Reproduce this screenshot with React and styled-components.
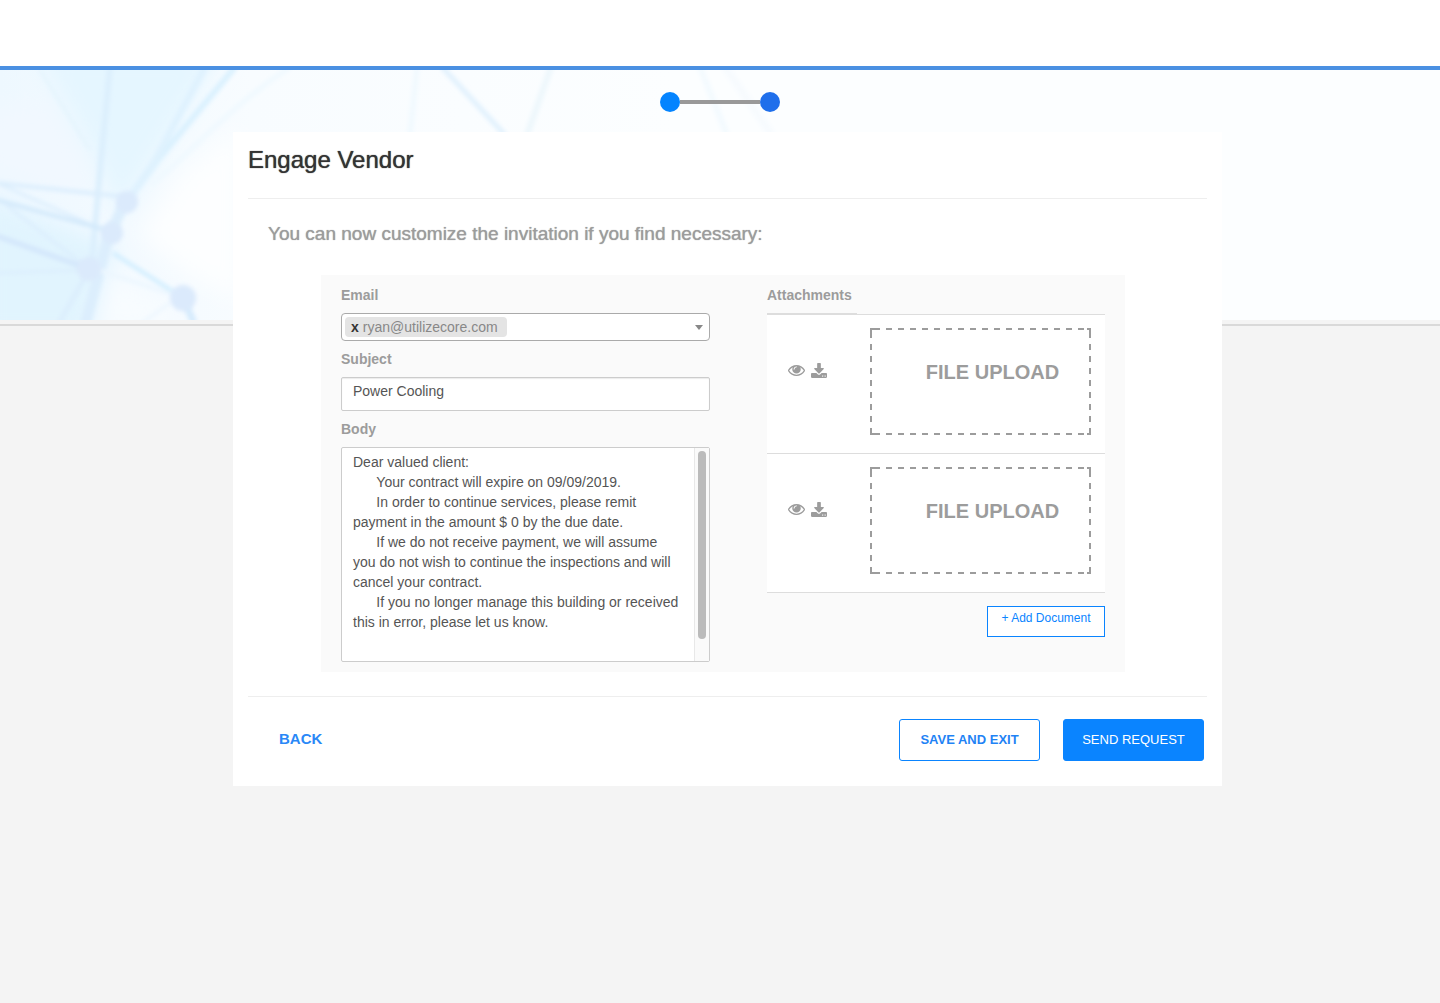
import React, { useState } from "react";
import styled, { createGlobalStyle, css } from "styled-components";

const GREY = "#9c9c9c";

const GlobalStyle = createGlobalStyle`
  *, *::before, *::after { box-sizing: border-box; }
  body {
    margin: 0;
    background: #f4f4f4;
    color: #333;
    font-family: "Liberation Sans", Helvetica, Arial, sans-serif;
    font-size: 14px;
    line-height: 20px;
  }
  button, input, textarea { font: inherit; }
`;

const TopBar = styled.header`
  height: 70px;
  background: #fff;
  border-bottom: 4px solid #4a90e2;
`;

const Page = styled.main`
  display: grid;
  grid-template-columns: minmax(0, 1fr);
  grid-template-rows: 256px auto;
`;

const Banner = styled.div`
  grid-area: 1 / 1;
  overflow: hidden;
  background: #fcfeff;
  border-bottom: 2px solid #d9d9d9;
  box-shadow: inset 0 -4px 0 #f4f4f4;

  svg { display: block; height: 250px; }
`;

const Content = styled.div`
  grid-area: 1 / 1 / 3 / 2;
  z-index: 1;
`;

const Steps = styled.nav`
  display: flex;
  align-items: center;
  justify-content: center;
  padding: 22px 0 20px;
`;

const StepDot = styled.span`
  width: 20px;
  height: 20px;
  border-radius: 50%;
  background: ${(p) => (p.$current ? "#1f6feb" : "#0484ff")};
`;

const StepLine = styled.span`
  width: 80px;
  height: 4px;
  background: #999;
`;

const CardArea = styled.div`
  display: flex;
  justify-content: center;
  padding-left: 15px;
`;

const Card = styled.section`
  width: 100%;
  max-width: 989px;
  padding: 0 15px;
  background: #fff;
`;

const Title = styled.h1`
  margin: 0;
  padding: 12px 0 22px;
  border-bottom: 1px solid #eee;
  font-size: 24px;
  font-weight: 400;
  line-height: 32px;
  text-shadow: 0 0 1px #333;
`;

const Intro = styled.p`
  margin: 0;
  padding: 24px 20px 30px;
  color: ${GREY};
  font-size: 19px;
  line-height: 22px;
  text-shadow: 0 0 1px ${GREY};
`;

const Panel = styled.form`
  display: grid;
  grid-template-columns: 369fr 338fr;
  gap: 57px;
  margin: 0 82px 24px 73px;
  padding: 10px 20px;
  background: #fafafa;
`;

const Fields = styled.div`
  display: flex;
  flex-direction: column;
  gap: 8px;
`;

const FieldLabel = styled.label`
  color: ${GREY};
  font-weight: 700;
`;

const TagBox = styled.div`
  display: flex;
  align-items: center;
  height: 28px;
  padding: 0 3px;
  border: 1px solid #aaa;
  border-radius: 4px;
  background: #fff;
`;

const Tag = styled.span`
  display: flex;
  align-items: center;
  gap: 4px;
  height: 20px;
  padding: 0 9px 0 6px;
  border-radius: 4px;
  background: #e4e4e4;
  color: #888;
`;

const TagRemove = styled.button`
  padding: 0;
  border: 0;
  background: none;
  color: #333;
  font-weight: 700;
  line-height: 18px;
  cursor: pointer;
`;

const TagInput = styled.input`
  flex: 1;
  min-width: 0;
  border: 0;
  outline: 0;
  background: transparent;
`;

const Caret = styled.button`
  display: flex;
  padding: 3px;
  border: 0;
  background: none;
  cursor: pointer;

  &::before {
    content: "";
    border: 4px solid transparent;
    border-top: 5px solid #888;
    border-bottom: 0;
  }
`;

const TextInput = styled.input`
  width: 100%;
  height: 34px;
  padding: 0 11px 6px;
  border: 1px solid #ccc;
  border-radius: 2px;
  background: #fff;
  box-shadow: inset 0 1px 1px rgba(0, 0, 0, 0.08);
  color: #555;
`;

const Editor = styled.div`
  display: flex;
  height: 215px;
  border: 1px solid #ccc;
  border-radius: 2px;
  background: #fff;
`;

const TextArea = styled.textarea`
  flex: 1;
  min-width: 0;
  padding: 4px 12px 8px 11px;
  border: 0;
  outline: 0;
  background: transparent;
  color: #555;
  resize: none;
  scrollbar-width: none;
`;

const ScrollTrack = styled.div`
  width: 15px;
  padding: 3px 3px 3px 3px;
  border-left: 1px solid #e8e8e8;
  background: #fafafa;
`;

const ScrollThumb = styled.div`
  width: 8px;
  border-radius: 4px;
  background: #bbb;
`;

const Files = styled.div`
  display: flex;
  flex-direction: column;
  align-items: flex-end;
  gap: 13px;
`;

const FileTable = styled.table`
  width: 100%;
  border-collapse: collapse;
`;

const FileHead = styled.th`
  width: 90px;
  height: 29px;
  padding: 0;
  border-bottom: 2px solid #ddd;
  color: ${GREY};
  text-align: left;
  vertical-align: top;
`;

const FileRow = styled.tr`
  background: #fff;
  border-top: 1px solid #ddd;
  border-bottom: 1px solid #ddd;
`;

const ActionCell = styled.td`
  padding: 0 0 26px 21px;
`;

const Actions = styled.div`
  display: flex;
  align-items: center;
  gap: 6px;
`;

const IconButton = styled.button`
  display: flex;
  padding: 0;
  border: 0;
  background: none;
  color: ${GREY};
  cursor: pointer;
`;

const DropCell = styled.td`
  padding: 13px 14px 18px 13px;
`;

const fill = `linear-gradient(${GREY}, ${GREY})`;
const across = `linear-gradient(90deg, ${GREY} 50%, transparent 50%)`;
const down = `linear-gradient(${GREY} 50%, transparent 50%)`;

/* Six-pixel dashes with six-pixel gaps, and solid corners. */
const dashedFrame = css`
  background:
    ${across} 4px top / 12px 2px repeat-x,
    ${across} 4px bottom / 12px 2px repeat-x,
    ${down} left 4px / 2px 12px repeat-y,
    ${down} right 4px / 2px 12px repeat-y,
    ${fill} left top / 4px 2px no-repeat,
    ${fill} right top / 4px 2px no-repeat,
    ${fill} left bottom / 4px 2px no-repeat,
    ${fill} right bottom / 4px 2px no-repeat,
    ${fill} left top / 2px 4px no-repeat,
    ${fill} right top / 2px 4px no-repeat,
    ${fill} left bottom / 2px 4px no-repeat,
    ${fill} right bottom / 2px 4px no-repeat;
`;

const DropZone = styled.label`
  display: flex;
  justify-content: center;
  height: 107px;
  padding: 33px 0 0 24px;
  ${dashedFrame}
  color: ${GREY};
  font-size: 20px;
  font-weight: 700;
  line-height: 22px;
  cursor: pointer;
`;

const FileInput = styled.input`
  position: absolute;
  width: 1px;
  height: 1px;
  opacity: 0;
`;

const AddButton = styled.button`
  min-width: 118px;
  height: 31px;
  padding: 0 12px 6px;
  border: 1px solid #0a84ff;
  background: #fff;
  color: #0a84ff;
  font-size: 12px;
  line-height: 20px;
  cursor: pointer;
`;

const Footer = styled.footer`
  display: flex;
  align-items: center;
  gap: 23px;
  padding: 22px 3px 25px 31px;
  border-top: 1px solid #eee;
`;

const BackLink = styled.a`
  margin-right: auto;
  padding-bottom: 2px;
  color: #2a88f7;
  font-size: 15px;
  font-weight: 700;
  text-decoration: none;
`;

const FooterButton = styled.button`
  width: 141px;
  height: 42px;
  padding: 0;
  border: 1px solid #0a84ff;
  border-radius: 3px;
  background: ${(p) => (p.$primary ? "#0a84ff" : "#fff")};
  color: ${(p) => (p.$primary ? "#fff" : "#1f83f5")};
  font-size: 13px;
  font-weight: ${(p) => (p.$primary ? 400 : 700)};
  cursor: pointer;
`;

const MESSAGE = `Dear valued client:
      Your contract will expire on 09/09/2019.
      In order to continue services, please remit payment in the amount $ 0 by the due date.
      If we do not receive payment, we will assume you do not wish to continue the inspections and will cancel your contract.
      If you no longer manage this building or received this in error, please let us know.

`;

function Network() {
  return (
    <svg width="900" height="250" viewBox="0 0 900 250" aria-hidden="true">
      <defs>
        <linearGradient id="wash" x1="0" x2="1" y1="0" y2="0">
          <stop offset="0" stopColor="#eef8ff" />
          <stop offset="0.28" stopColor="#f8fcff" />
          <stop offset="0.75" stopColor="#fcfeff" />
        </linearGradient>
        <filter id="haze" x="-20%" y="-20%" width="140%" height="140%">
          <feGaussianBlur stdDeviation="11" />
        </filter>
        <filter id="soft" filterUnits="userSpaceOnUse" x="-20" y="-20" width="940" height="290">
          <feGaussianBlur stdDeviation="2" />
        </filter>
      </defs>
      <rect width="900" height="250" fill="url(#wash)" />
      <g filter="url(#haze)">
        <path d="M35 -20H225L155 90L118 145L96 90Z" fill="#e5f6ff" />
        <path d="M-20 125L90 165L115 175L88 270H-20Z" fill="#e1f4fe" />
        <path d="M-20 40L50 30L90 100L80 125L-20 100Z" fill="#f1f8ff" />
        <path d="M240 60L185 100L140 165L190 205L240 230Z" fill="#fdfeff" />
        <path d="M105 200L170 235L175 260H95Z" fill="#f8fcff" />
      </g>
      <g filter="url(#soft)" fill="none" stroke="#dceefd" strokeWidth="4">
        <path d="M235 -3L160 87L127 132" stroke="#daf1fe" strokeWidth="6" />
        <path d="M205 -3L155 90L124 136" stroke="#dff2fe" strokeWidth="7" />
        <path d="M126 130L108 168L85 255" stroke="#dceefd" strokeWidth="11" />
        <path d="M110 -3L102 80L91 200" stroke="#dceffd" strokeWidth="6" />
        <path d="M-3 113L127 127" />
        <path d="M-3 113L110 163" strokeWidth="3" />
        <path d="M-3 130L110 161" stroke="#d3e9fb" />
        <path d="M5 134L89 199" strokeWidth="3" />
        <path d="M-3 166L89 199" stroke="#d3e6fb" strokeWidth="5" />
        <path d="M-3 203L89 200" strokeWidth="3" />
        <path d="M113 183L183 228" stroke="#d2eefe" />
        <path d="M183 228L194 253" stroke="#d6ebfd" strokeWidth="7" />
        <path d="M89 200L58 255" strokeWidth="5" />
        <path d="M98 200L175 225" stroke="#edf7fe" />
        <path d="M170 233L142 253" stroke="#edf7fe" strokeWidth="3" />
        <path d="M40 0L90 80" stroke="#e4f4fd" strokeWidth="3" />
        <path d="M290 -3C225 40 190 85 150 115" stroke="#f0f9ff" strokeWidth="5" />
        <path d="M442 -3L505 65" stroke="#e1f1fd" strokeWidth="5" />
        <path d="M417 -3L410 65" stroke="#f0f9fe" strokeWidth="5" />
        <path d="M551 -3L527 65" stroke="#edf7fc" strokeWidth="6" />
        <path d="M700 -3L727 65" stroke="#f3fafe" strokeWidth="6" />
        <path d="M725 -3L772 65" stroke="#f7fbfe" strokeWidth="8" />
      </g>
      <g filter="url(#soft)" fill="#dbeafc">
        <circle cx="127" cy="132" r="11" />
        <circle cx="112" cy="163" r="11" />
        <circle cx="89" cy="199" r="12" />
        <circle cx="183" cy="228" r="13" />
      </g>
    </svg>
  );
}

function EyeIcon() {
  return (
    <svg width="17" height="11" viewBox="0 384 1792 1152" fill="currentColor" aria-hidden="true">
      <path d="M1664 960q-152-236-381-353 61 104 61 225 0 185-131.5 316.5t-316.5 131.5-316.5-131.5-131.5-316.5q0-121 61-225-229 117-381 353 133 205 333.5 326.5t434.5 121.5 434.5-121.5 333.5-326.5zm-720-384q0-20-14-34t-34-14q-125 0-214.5 89.5t-89.5 214.5q0 20 14 34t34 14 34-14 14-34q0-86 61-147t147-61q20 0 34-14t14-34zm848 384q0 34-20 69-140 230-376.5 368.5t-499.5 138.5-499.5-139-376.5-368q-20-35-20-69t20-69q140-229 376.5-368t499.5-139 499.5 139 376.5 368q20 35 20 69z" />
    </svg>
  );
}

function DownloadIcon() {
  return (
    <svg width="16" height="15" viewBox="0 0 1664 1536" fill="currentColor" aria-hidden="true">
      <path d="M1280 1344q0-26-19-45t-45-19-45 19-19 45 19 45 45 19 45-19 19-45zm256 0q0-26-19-45t-45-19-45 19-19 45 19 45 45 19 45-19 19-45zm128-224v320q0 40-28 68t-68 28h-1472q-40 0-68-28t-28-68v-320q0-40 28-68t68-28h465l135 136q58 56 136 56t136-56l136-136h464q40 0 68 28t28 68zm-325-569q17 41-14 70l-448 448q-18 19-45 19t-45-19l-448-448q-31-29-14-70 17-39 59-39h256v-448q0-26 19-45t45-19h256q26 0 45 19t19 45v448h256q42 0 59 39z" />
    </svg>
  );
}

function Attachment({ index }) {
  const id = `file-${index}`;
  return (
    <FileRow>
      <ActionCell>
        <Actions>
          <IconButton type="button" aria-label="View"><EyeIcon /></IconButton>
          <IconButton type="button" aria-label="Download"><DownloadIcon /></IconButton>
        </Actions>
      </ActionCell>
      <DropCell>
        <FileInput id={id} type="file" />
        <DropZone htmlFor={id}>FILE UPLOAD</DropZone>
      </DropCell>
    </FileRow>
  );
}

function MessageEditor({ id }) {
  const [scroll, setScroll] = useState({ size: 91, top: 0 });

  const follow = (e) => {
    const { scrollTop, scrollHeight, clientHeight } = e.currentTarget;
    const size = Math.min(91, (clientHeight / scrollHeight) * 100);
    const range = Math.max(1, scrollHeight - clientHeight);
    setScroll({ size, top: (scrollTop / range) * (100 - size) * 2 });
  };

  return (
    <Editor>
      <TextArea id={id} defaultValue={MESSAGE} onScroll={follow} />
      <ScrollTrack aria-hidden="true">
        <ScrollThumb style={{ height: `${scroll.size}%`, marginTop: `${scroll.top}px` }} />
      </ScrollTrack>
    </Editor>
  );
}

export default function App() {
  const [recipients, setRecipients] = useState(["ryan@utilizecore.com"]);
  const [files, setFiles] = useState([1, 2]);

  return (
    <>
      <GlobalStyle />
      <TopBar />
      <Page>
        <Banner><Network /></Banner>
        <Content>
          <Steps aria-label="Progress">
            <StepDot />
            <StepLine />
            <StepDot $current />
          </Steps>
          <CardArea>
            <Card>
              <Title>Engage Vendor</Title>
              <Intro>You can now customize the invitation if you find necessary:</Intro>
              <Panel onSubmit={(e) => e.preventDefault()}>
                <Fields>
                  <FieldLabel htmlFor="email">Email</FieldLabel>
                  <TagBox>
                    {recipients.map((address) => (
                      <Tag key={address}>
                        <TagRemove
                          type="button"
                          onClick={() => setRecipients(recipients.filter((r) => r !== address))}
                        >
                          x
                        </TagRemove>
                        {address}
                      </Tag>
                    ))}
                    <TagInput id="email" type="text" />
                    <Caret type="button" aria-label="Show addresses" />
                  </TagBox>
                  <FieldLabel htmlFor="subject">Subject</FieldLabel>
                  <TextInput id="subject" type="text" defaultValue="Power Cooling" />
                  <FieldLabel htmlFor="body">Body</FieldLabel>
                  <MessageEditor id="body" />
                </Fields>
                <Files>
                  <FileTable>
                    <thead>
                      <tr>
                        <FileHead scope="col">Attachments</FileHead>
                        <td />
                      </tr>
                    </thead>
                    <tbody>
                      {files.map((n) => <Attachment key={n} index={n} />)}
                    </tbody>
                  </FileTable>
                  <AddButton type="button" onClick={() => setFiles([...files, files.length + 1])}>
                    + Add Document
                  </AddButton>
                </Files>
              </Panel>
              <Footer>
                <BackLink href="#back">BACK</BackLink>
                <FooterButton type="button">SAVE AND EXIT</FooterButton>
                <FooterButton type="button" $primary>SEND REQUEST</FooterButton>
              </Footer>
            </Card>
          </CardArea>
        </Content>
      </Page>
    </>
  );
}
